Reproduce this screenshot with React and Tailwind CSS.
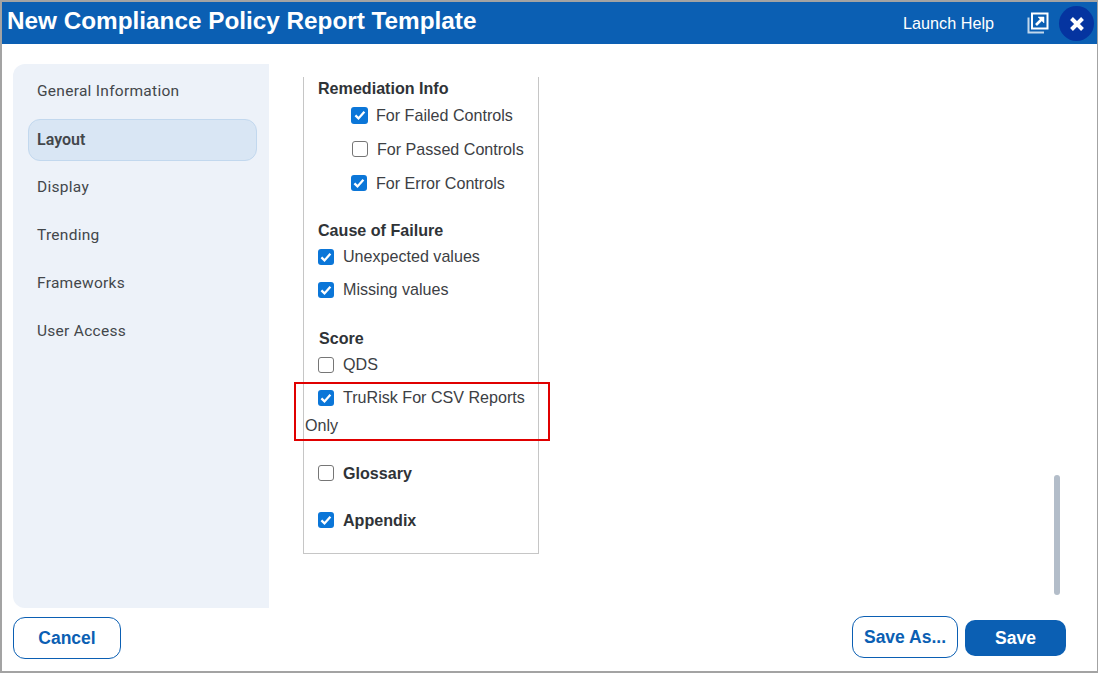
import React from "react"

const navItems = ["General Information", "Layout", "Display", "Trending", "Frameworks", "User Access"]

function Check({ checked, large }) {
    if (!checked) {
        return <span className="w-4 h-4 shrink-0 rounded-[3px] border-[1.5px] border-[#767676] bg-white" />
    }
    return (
        <span className={`${large ? "w-[17px] h-[17px] -mr-px" : "w-4 h-4"} shrink-0 rounded-[3px] bg-[#0b76d8] flex items-center justify-center`}>
            <svg viewBox="0 0 16 16" className="w-4 h-4" fill="none" stroke="white" strokeWidth="2.3">
                <path d="M3.4 8.4 6.5 11.4 12.4 4.8" />
            </svg>
        </span>
    )
}

function Row({ checked, large, label, className, bold }) {
    return (
        <div className={`flex items-center gap-[9px] ${className}`}>
            <Check checked={checked} large={large} />
            <span className={bold ? "font-bold text-[#2f3337]" : ""}>{label}</span>
        </div>
    )
}

function Heading({ children, className }) {
    return <div className={`h-5 leading-5 font-bold text-[#2f3337] ${className}`}>{children}</div>
}

export default function App() {
    return (
        <div className="relative w-[1098px] h-[673px] bg-white border-t-2 border-b-2 border-l-2 border-r-[1px] border-[#a3a3a3] flex flex-col overflow-hidden font-['Liberation_Sans',sans-serif]">
            {/* Header */}
            <div className="h-[42px] shrink-0 bg-[#0b5fb3] flex items-center text-white">
                <div className="pl-[5px] text-[24.3px] font-bold leading-none -mt-[3px]">New Compliance Policy Report Template</div>
                <div className="ml-auto text-[16.2px]">Launch Help</div>
                <svg viewBox="0 0 22 22" className="w-[22px] h-[22px] ml-[33px]" fill="none" stroke="white">
                    <path d="M5 1.5H20.5V16.5H5Z" strokeWidth="2" />
                    <path d="M1.5 5.5V20.5H17" strokeWidth="2" opacity="0.75" />
                    <path d="M9 13 15.5 6.5" strokeWidth="2.6" />
                    <path d="M11 5H17V11Z" fill="white" strokeWidth="0.5" />
                </svg>
                <div className="w-[35px] h-[35px] ml-[10px] mr-[3px] mt-px rounded-full bg-[#0534a0] flex items-center justify-center">
                    <svg viewBox="0 0 16 16" className="w-4 h-4" fill="none" stroke="white" strokeWidth="4">
                        <path d="M2.5 2.5 13.5 13.5M13.5 2.5 2.5 13.5" />
                    </svg>
                </div>
            </div>

            {/* Body */}
            <div className="flex pt-5 pl-[11px] h-[564px] shrink-0">
                <div className="w-[256px] h-[544px] bg-[#edf2f9] rounded-l-[12px] pt-[7px] pl-[15px] pr-3 flex flex-col gap-[6px] font-['Roboto',sans-serif] text-[15.5px] tracking-[0.28px] text-[#43474b]">
                    {navItems.map((item) => (
                        <div
                            key={item}
                            className={`h-[42px] flex items-center pl-2 rounded-[12px] border ${item === "Layout" ? "bg-[#d9e6f4] border-[#c2d8ee] font-semibold text-[16px] tracking-normal" : "border-transparent"}`}
                        >
                            {item}
                        </div>
                    ))}
                </div>

                <div className="ml-[34px] mt-[13px] pt-px w-[236px] h-[477px] border-l border-r border-b border-[#c6c6c6] text-[16.1px] text-[#3c4044]">
                    <Heading className="ml-[14px]">Remediation Info</Heading>
                    <Row checked large label="For Failed Controls" className="h-[34px] ml-[47px]" />
                    <Row label="For Passed Controls" className="h-[34px] ml-[48px] gap-[9px]" />
                    <Row checked label="For Error Controls" className="h-[34px] ml-[47px]" />
                    <Heading className="ml-[14px] mt-5">Cause of Failure</Heading>
                    <Row checked label="Unexpected values" className="h-[33px] ml-[14px]" />
                    <Row checked label="Missing values" className="h-[33px] ml-[14px]" />
                    <Heading className="ml-[15px] mt-[22px]">Score</Heading>
                    <Row label="QDS" className="h-[33px] ml-[14px]" />
                    <Row checked label="TruRisk For CSV Reports" className="h-[33px] ml-[14px]" />
                    <div className="h-5 leading-5 mt-px ml-px">Only</div>
                    <Row bold label="Glossary" className="h-[34px] mt-[21px] ml-[14px]" />
                    <Row checked bold label="Appendix" className="h-[34px] mt-[13px] ml-[14px] gap-[8px]" />
                </div>
            </div>

            {/* Footer */}
            <div className="flex items-start justify-between pl-[11px] pr-[31px] pt-[9px] text-[#0b5fb3] text-[17.5px] font-bold">
                <button className="w-[108px] h-[42px] rounded-[12px] border border-[#0b5fb3] bg-white">Cancel</button>
                <div className="flex items-start gap-[7px]">
                    <button className="w-[106px] h-[42px] rounded-[12px] border border-[#0b5fb3] bg-white -mt-px">Save As...</button>
                    <button className="w-[101px] h-9 mt-[3px] rounded-[10px] bg-[#0b5fb3] text-white">Save</button>
                </div>
            </div>

            {/* Scroll thumb and annotation box lie over the content */}
            <div className="absolute left-[1052px] top-[473px] w-[6px] h-[120px] rounded-[3px] bg-[#b3bdc9]" />
            <div className="absolute left-[292px] top-[380px] w-[256px] h-[59px] border-2 border-[#e00000]" />
        </div>
    )
}
